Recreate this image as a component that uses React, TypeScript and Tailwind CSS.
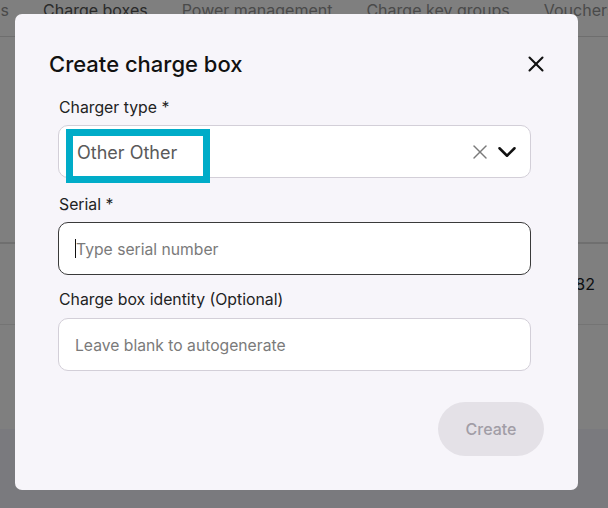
import { ChevronDown, X } from "lucide-react";

const FONT = "font-['Inter','Noto_Sans',sans-serif]";

const TABS = ["Locations", "Charge boxes", "Power management", "Charge key groups", "Vouchers"];

function Backdrop() {
  return (
    <div className="flex h-full flex-col bg-white">
      {/* tab strip */}
      <div className="flex h-[37px] shrink-0 border-b border-[#dcdcdc]">
        <div className="ml-[-71px] mt-[-2px] flex gap-[34px] whitespace-nowrap text-[16px] leading-6">
          {TABS.map((t, i) => (
            <span
              key={t}
              className={
                i === 0
                  ? "w-[80px] text-right text-[#949494]"
                  : i === 1
                    ? "text-[#545454]"
                    : "text-[#949494]"
              }
            >
              {t}
            </span>
          ))}
        </div>
      </div>
      <div className="h-[207px] shrink-0 border-b-2 border-[#dedede]" />
      <div className="flex h-[81px] shrink-0 items-center justify-end border-b border-[#e8e8e8] pr-[13px] text-[16px] text-[#1a1d26]">
        40082
      </div>
      <div className="h-[104px] shrink-0" />
      <div className="flex-1 bg-[#f4f4fc]" />
    </div>
  );
}

function Label({ children }: { children: React.ReactNode }) {
  return (
    <div className="-mb-px pl-px pt-px text-[15.8px] leading-6 text-[#222]">{children}</div>
  );
}

export default function App() {
  return (
    <div className={`relative h-[508px] w-[608px] overflow-hidden ${FONT}`}>
      <Backdrop />
      <div className="absolute inset-0 bg-black/50" />

      {/* dialog */}
      <div className="absolute left-[15px] top-[14px] flex h-[476px] w-[563px] flex-col rounded-[7px] bg-[#f7f5fa] px-[34px] pt-[36px]">
        <div className="flex h-7 items-center justify-between">
          <h2 className="text-[22px] font-medium leading-7 text-[#111]">Create charge box</h2>
          <X className="-mr-[5px] size-[26px] text-[#111]" strokeWidth={1.9} />
        </div>

        <div className="ml-[9px] mr-[13px] mt-[17px] flex flex-col">
          <Label>Charger type *</Label>
          <div className="relative mt-[6px] flex h-[53px] items-center rounded-[10px] border border-[#d3cfd8] bg-white pl-[18px] pr-[8px]">
            <span className="flex-1 pt-px text-[18px] text-[#5a5a5a]">Other Other</span>
            <X className="size-[24px] text-[#7a7a7a]" strokeWidth={1.4} />
            <ChevronDown className="size-[30px] text-[#111]" strokeWidth={2} />
            <div className="absolute left-[7px] top-[3px] h-[54px] w-[144px] border-[7px] border-[#00acc8]" />
          </div>

          <div className="mt-[14px]">
            <Label>Serial *</Label>
          </div>
          <div className="mt-[6px] flex h-[53px] items-center rounded-[10px] border border-[#3a3a3a] bg-white pl-[16px]">
            <span className="h-[19px] w-px bg-[#111]" />
            <span className="pt-[2px] text-[15.7px] text-[#7a7a7a]">Type serial number</span>
          </div>

          <div className="mt-[12px]">
            <Label>Charge box identity (Optional)</Label>
          </div>
          <div className="mt-[7px] flex h-[53px] items-center rounded-[10px] border border-[#d3cfd8] bg-white pl-[16px]">
            <span className="pt-[2px] text-[15.7px] text-[#7a7a7a]">Leave blank to autogenerate</span>
          </div>
        </div>

        <div className="mt-[31px] flex justify-end">
          <button
            type="button"
            disabled
            className="h-[54px] w-[106px] rounded-full bg-[#e4e1e7] pb-px text-[16px] font-medium text-[#a19da6]"
          >
            Create
          </button>
        </div>
      </div>
    </div>
  );
}
